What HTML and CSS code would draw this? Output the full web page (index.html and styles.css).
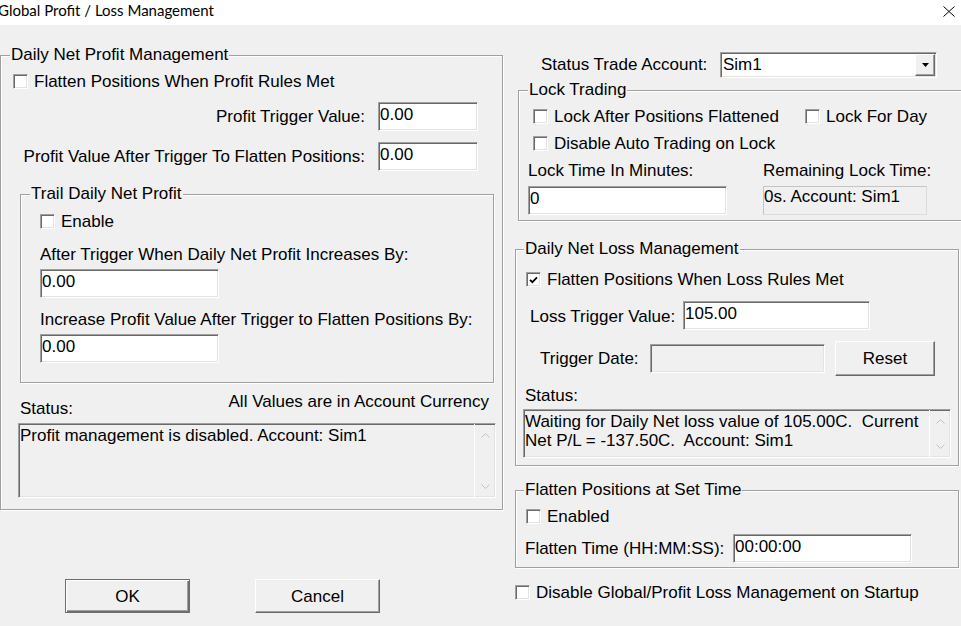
FILE: index.html
```html
<!DOCTYPE html>
<html lang="en">
<head>
<meta charset="utf-8">
<title>Global Profit / Loss Management</title>
<link rel="stylesheet" href="styles.css">
</head>
<body>
<div class="window">
  <header class="titlebar">
    <span class="title">Global Profit / Loss Management</span>
    <svg class="close" width="12" height="11" viewBox="0 0 12 11" aria-label="Close">
      <path d="M0.5 0.5 L11.5 10.5 M11.5 0.5 L0.5 10.5" stroke="#000" stroke-width="1" fill="none"/>
    </svg>
  </header>

  <main class="dialog">
    <div class="col-left">
      <fieldset class="group profit">
        <legend>Daily Net Profit Management</legend>
        <label class="check profit-flatten"><span class="box"></span><span class="check-text">Flatten Positions When Profit Rules Met</span></label>

        <div class="profit-fields">
          <span class="lbl">Profit Trigger Value:</span>
          <input class="field" type="text" value="0.00">
          <span class="lbl">Profit Value After Trigger To Flatten Positions:</span>
          <input class="field" type="text" value="0.00">
        </div>

        <fieldset class="group trail">
          <legend>Trail Daily Net Profit</legend>
          <label class="check trail-enable"><span class="box"></span><span class="check-text">Enable</span></label>
          <div class="caption">After Trigger When Daily Net Profit Increases By:</div>
          <input class="field trail-input" type="text" value="0.00">
          <div class="caption">Increase Profit Value After Trigger to Flatten Positions By:</div>
          <input class="field trail-input" type="text" value="0.00">
        </fieldset>

        <div class="status-head">
          <span class="status-lbl">Status:</span>
          <span class="currency">All Values are in Account Currency</span>
        </div>
        <div class="memo profit-memo">
          <div class="memo-text">Profit management is disabled. Account: Sim1</div>
          <div class="memo-scroll">
            <svg width="9" height="5" viewBox="0 0 9 5"><polyline points="0.5,4.5 4.5,0.5 8.5,4.5" fill="none" stroke="#c2c2c2"/></svg>
            <svg width="9" height="5" viewBox="0 0 9 5"><polyline points="0.5,0.5 4.5,4.5 8.5,0.5" fill="none" stroke="#c2c2c2"/></svg>
          </div>
        </div>
      </fieldset>

      <div class="buttons">
        <button class="btn btn-default" type="button">OK</button>
        <button class="btn" type="button">Cancel</button>
      </div>
    </div>

    <div class="col-right">
      <div class="account">
        <span class="account-lbl">Status Trade Account:</span>
        <div class="combo">
          <span class="combo-value">Sim1</span>
          <span class="combo-btn">
            <svg width="7" height="4" viewBox="0 0 7 4"><polygon points="0,0 7,0 3.5,4" fill="#000"/></svg>
          </span>
        </div>
      </div>

      <fieldset class="group lock">
        <legend>Lock Trading</legend>
        <div class="lock-checks">
          <label class="check"><span class="box"></span><span class="check-text">Lock After Positions Flattened</span></label>
          <label class="check"><span class="box"></span><span class="check-text">Lock For Day</span></label>
          <label class="check"><span class="box"></span><span class="check-text">Disable Auto Trading on Lock</span></label>
        </div>
        <div class="lock-time">
          <span class="lbl-left">Lock Time In Minutes:</span>
          <span class="lbl-left">Remaining Lock Time:</span>
          <input class="field" type="text" value="0">
          <div class="readout">0s. Account: Sim1</div>
        </div>
      </fieldset>

      <fieldset class="group loss">
        <legend>Daily Net Loss Management</legend>
        <label class="check loss-flatten">
          <span class="box"><svg width="9" height="8" viewBox="0 0 9 8"><polyline points="1,3.8 3.4,6.2 8,1.4" fill="none" stroke="#000" stroke-width="1.8"/></svg></span><span class="check-text">Flatten Positions When Loss Rules Met</span>
        </label>
        <div class="loss-trigger">
          <span class="loss-lbl">Loss Trigger Value:</span>
          <input class="field loss-input" type="text" value="105.00">
        </div>
        <div class="loss-date">
          <span class="date-lbl">Trigger Date:</span>
          <div class="field field-disabled date-box"></div>
          <button class="btn btn-reset" type="button">Reset</button>
        </div>
        <div class="loss-status-lbl">Status:</div>
        <div class="memo loss-memo">
          <div class="memo-text">Waiting for Daily Net loss value of 105.00C.&nbsp; Current<br>Net P/L = -137.50C.&nbsp; Account: Sim1</div>
          <div class="memo-scroll">
            <svg width="9" height="5" viewBox="0 0 9 5"><polyline points="0.5,4.5 4.5,0.5 8.5,4.5" fill="none" stroke="#c2c2c2"/></svg>
            <svg width="9" height="5" viewBox="0 0 9 5"><polyline points="0.5,0.5 4.5,4.5 8.5,0.5" fill="none" stroke="#c2c2c2"/></svg>
          </div>
        </div>
      </fieldset>

      <fieldset class="group flatten">
        <legend>Flatten Positions at Set Time</legend>
        <label class="check flatten-enable"><span class="box"></span><span class="check-text">Enabled</span></label>
        <div class="flatten-time">
          <span class="time-lbl">Flatten Time (HH:MM:SS):</span>
          <input class="field time-input" type="text" value="00:00:00">
        </div>
      </fieldset>

      <label class="check startup"><span class="box"></span><span class="check-text">Disable Global/Profit Loss Management on Startup</span></label>
    </div>
  </main>
</div>
</body>
</html>
```

FILE: styles.css
```css
html, body {
  margin: 0;
  height: 100%;
  overflow: hidden;
}

body {
  background: #f0f0f0;
  color: #000;
  font-family: "Liberation Sans", Arial, sans-serif;
  font-size: 17px;
  line-height: 20px;
}

/* ---------- window caption ---------- */
.titlebar {
  height: 25px;
  background: #fff;
  display: flex;
  justify-content: space-between;
  align-items: flex-start;
}

.title {
  font-family: Lato, "Noto Sans", sans-serif;
  font-size: 15px;
  line-height: 20px;
  margin-left: -2px;
  white-space: nowrap;
}

.close {
  margin: 6px 6px 0 0;
}

/* ---------- dialog body ---------- */
.dialog {
  display: grid;
  grid-template-columns: 503px 1fr;
  column-gap: 12px;
  align-items: start;
}

.col-left,
.col-right {
  display: flex;
  flex-direction: column;
  min-width: 0;
}

/* etched group box */
.group {
  margin: 0;
  min-width: 0;
  border: 1px solid #a0a0a0;
  box-shadow: 1px 1px 0 #fff, inset 1px 1px 0 #fff;
}

.group > legend {
  padding: 0 1px;
  line-height: 20px;
  background: #f0f0f0;
}

/* ---------- common controls ---------- */
.check {
  display: flex;
  align-items: flex-start;
  height: 20px;
  white-space: nowrap;
}

.check-text {
  padding-top: 2px;
  line-height: 18px;
}

.box {
  box-sizing: border-box;
  width: 15px;
  height: 15px;
  flex: none;
  margin: 3px 6px 0 0;
  background: #fff;
  border: 1px solid;
  border-color: #a0a0a0 #fff #fff #a0a0a0;
  box-shadow: inset 1px 1px 0 #696969, inset -1px -1px 0 #e3e3e3;
  display: flex;
  align-items: center;
  justify-content: center;
}

.field {
  box-sizing: border-box;
  height: 29px;
  margin: 0;
  padding: 0 2px 4px 1px;
  border: 1px solid;
  border-color: #a0a0a0 #fff #fff #a0a0a0;
  box-shadow: inset 1px 1px 0 #696969, inset -1px -1px 0 #e3e3e3;
  background: #fff;
  color: #000;
  font: inherit;
  outline: none;
  border-radius: 0;
}

.field-disabled {
  background: #f0f0f0;
}

.btn {
  box-sizing: border-box;
  margin: 0;
  padding: 0;
  font: inherit;
  color: #000;
  background: #f0f0f0;
  border: 1px solid;
  border-color: #fff #696969 #696969 #fff;
  box-shadow: inset -1px -1px 0 #a0a0a0;
  border-radius: 0;
}

.btn-default {
  border-color: #6d6d6d;
  box-shadow: inset 1px 1px 0 #fff, inset -1px -1px 0 #6d6d6d, inset -2px -2px 0 #a0a0a0;
}

/* read-only multi-line status */
.memo {
  box-sizing: border-box;
  display: flex;
  border: 1px solid;
  border-color: #a0a0a0 #fff #fff #a0a0a0;
  box-shadow: inset 1px 1px 0 #696969, inset -1px -1px 0 #e3e3e3;
  background: #f0f0f0;
}

.memo-text {
  flex: 1;
  padding: 2px 0 0 1px;
  line-height: 19px;
}

.memo-scroll {
  width: 20px;
  border-left: 1px solid #fff;
  display: flex;
  flex-direction: column;
  justify-content: space-between;
  align-items: center;
  padding: 9px 0 8px;
}

.memo-scroll svg {
  display: block;
}

/* ---------- daily net profit ---------- */
.profit {
  margin-top: 20px;
  padding: 0 24px 11px 12px;
}

.profit > legend {
  margin-left: -3px;
}

.profit-flatten {
  margin-top: 6px;
}

.profit-fields {
  margin-top: 11px;
  display: grid;
  grid-template-columns: 1fr 100px;
  grid-auto-rows: 29px;
  column-gap: 13px;
  row-gap: 11px;
  align-items: center;
}

.profit-fields .lbl {
  justify-self: end;
  white-space: nowrap;
  padding-top: 1px;
}

.profit-fields .field {
  width: 100px;
}

.trail {
  margin: 13px -16px 0 7px;
  padding: 0 0 19px 19px;
}

.trail > legend {
  margin-left: -10px;
}

.trail-enable {
  margin-top: 7px;
}

.trail .caption {
  margin-top: 14px;
}

.trail .caption + .trail-input + .caption {
  margin-top: 12px;
}

.trail-input {
  display: block;
  width: 179px;
  margin-top: 4px;
}

.status-head {
  margin: 8px -11px 0 7px;
  display: flex;
  justify-content: space-between;
  align-items: flex-start;
}

.status-lbl {
  margin-top: 8px;
}

.currency {
  padding-top: 1px;
}

.profit-memo {
  margin: 4px -18px 0 5px;
  height: 75px;
}

.buttons {
  margin-top: 69px;
  display: flex;
  gap: 65px;
  padding-left: 65px;
}

.buttons .btn {
  width: 125px;
  height: 34px;
  padding-top: 1px;
}

/* ---------- right column ---------- */
.account {
  margin-top: 27px;
  padding-left: 26px;
  display: flex;
  align-items: center;
}

.combo {
  box-sizing: border-box;
  width: 217px;
  height: 26px;
  margin: 0 24px 0 auto;
  padding: 1px;
  display: flex;
  background: #fff;
  border: 1px solid;
  border-color: #a0a0a0 #fff #fff #a0a0a0;
  box-shadow: inset 1px 1px 0 #696969, inset -1px -1px 0 #e3e3e3;
}

.combo-value {
  flex: 1;
  padding-left: 1px;
  display: flex;
  align-items: center;
}

.combo-btn {
  box-sizing: border-box;
  width: 20px;
  background: #f0f0f0;
  border: 1px solid;
  border-color: #fff #696969 #696969 #fff;
  box-shadow: inset -1px -1px 0 #a0a0a0;
  display: flex;
  align-items: center;
  justify-content: center;
}

.combo-btn svg {
  display: block;
}

/* lock trading */
.lock {
  margin: 2px -2px 0 3px;
  padding: 0 0 5px 9px;
}

.lock > legend {
  margin-left: 0;
}

.lock-checks {
  margin: 6px 0 0 5px;
  display: grid;
  grid-template-columns: 272px auto;
  row-gap: 7px;
}

.lock-time {
  margin-top: 7px;
  display: grid;
  grid-template-columns: 199px 164px;
  grid-template-rows: 20px 29px;
  column-gap: 36px;
  row-gap: 6px;
}

.lbl-left {
  white-space: nowrap;
  padding-top: 1px;
}

.readout {
  box-sizing: border-box;
  height: 29px;
  border: 1px solid;
  border-color: #c4c4c4 #dcdcdc #dcdcdc #c4c4c4;
  white-space: nowrap;
}

/* daily net loss */
.loss {
  margin: 18px 2px 0 0;
  padding: 0 0 7px 10px;
}

.loss > legend {
  margin-left: -2px;
}

.loss-flatten {
  margin-top: 10px;
}

.loss-trigger {
  margin-top: 12px;
  display: flex;
  align-items: center;
}

.loss-lbl {
  width: 153px;
  margin-left: 4px;
  padding-top: 2px;
  white-space: nowrap;
}

.loss-input {
  width: 187px;
}

.loss-date {
  margin-top: 11px;
  display: flex;
  align-items: center;
}

.date-lbl {
  width: 110px;
  margin-left: 14px;
}

.date-box {
  width: 175px;
}

.btn-reset {
  width: 100px;
  height: 35px;
  margin-left: 10px;
}

.loss-status-lbl {
  margin: 10px 0 0 -1px;
}

.loss-memo {
  margin: 3px 0 0 -3px;
  width: 428px;
  height: 49px;
}

/* flatten at set time */
.flatten {
  margin: 14px 2px 0 0;
  padding: 0 0 4px 10px;
}

.flatten > legend {
  margin-left: -2px;
}

.flatten-enable {
  margin-top: 6px;
}

.flatten-time {
  margin-top: 8px;
  display: flex;
  align-items: center;
}

.time-lbl {
  width: 208px;
  margin-left: -1px;
  white-space: nowrap;
}

.time-input {
  width: 179px;
}

.startup {
  margin-top: 14px;
}
```
